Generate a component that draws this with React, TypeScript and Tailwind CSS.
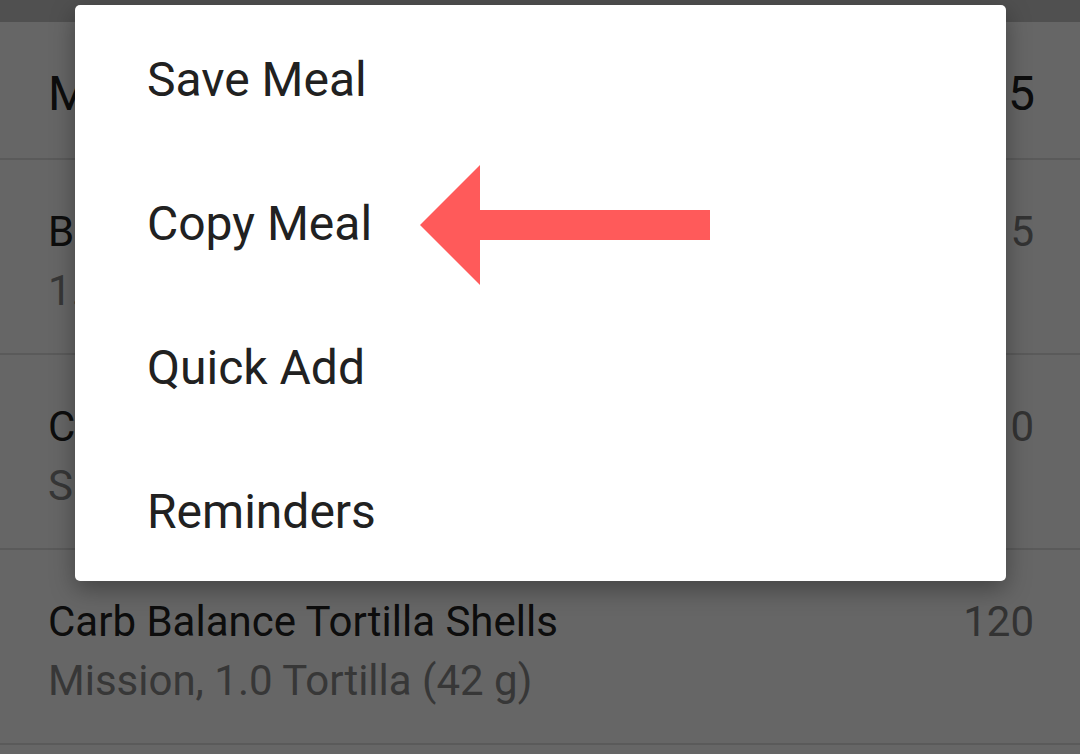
import React from 'react';

type Food = { name: string; detail: string; kcal: string };

const foods: Food[] = [
  { name: 'Buffalo Wing Sauce', detail: '1.0 tbsp (15 g)', kcal: '5' },
  { name: 'Cheddar Cheese, Shredded', detail: 'Sargento, 0.25 cup (28 g)', kcal: '110' },
  { name: 'Carb Balance Tortilla Shells', detail: 'Mission, 1.0 Tortilla (42 g)', kcal: '120' },
];

const menuItems = ['Save Meal', 'Copy Meal', 'Quick Add', 'Reminders'];

const FoodRow = ({ food }: { food: Food }) => (
  <div className="flex h-[195px] items-start justify-between border-b-2 border-[#e0e0e0] pl-12 pr-[46px] pt-[47px]">
    <div>
      <p className="text-[42px] leading-[49px] text-[#212121]">{food.name}</p>
      <p className="mt-[10px] text-[42px] leading-[49px] text-[#8a8a8a]">{food.detail}</p>
    </div>
    <p className="text-[42px] leading-[49px] text-[#808080]">{food.kcal}</p>
  </div>
);

const App: React.FC = () => {
  return (
    <div className="relative h-[754px] w-[1080px] overflow-hidden bg-white font-[Roboto,sans-serif]">
      {/* diary list underneath */}
      <div className="h-[22px] bg-[#c8c8c8]"></div>
      <div className="flex h-[138px] items-start justify-between border-b-2 border-[#e0e0e0] pl-12 pr-[45px] pt-[44px]">
        <p className="text-[48px] leading-[56px] text-[#212121]">Meal 2</p>
        <p className="text-[48px] leading-[56px] text-[#212121]">235</p>
      </div>
      {foods.map((f) => (
        <FoodRow key={f.name} food={f} />
      ))}

      {/* scrim */}
      <div className="absolute inset-0 bg-black/60"></div>

      {/* popup menu */}
      <div className="absolute left-[75px] top-[5px] w-[931px] rounded-[5px] bg-white shadow-[0_8px_24px_rgba(0,0,0,0.35)]">
        {menuItems.map((label) => (
          <div key={label} className="flex h-[144px] items-center pl-[72px] pt-[6px]">
            <span className="text-[48px] leading-[56px] text-[#212121]">{label}</span>
          </div>
        ))}

        {/* annotation arrow */}
        <svg className="absolute left-[345px] top-[160px]" width="290" height="120" viewBox="0 0 290 120">
          <polygon points="0,60 60,0 60,45 290,45 290,75 60,75 60,120" fill="#ff5a5a" />
        </svg>
      </div>
    </div>
  );
};

export default App;
